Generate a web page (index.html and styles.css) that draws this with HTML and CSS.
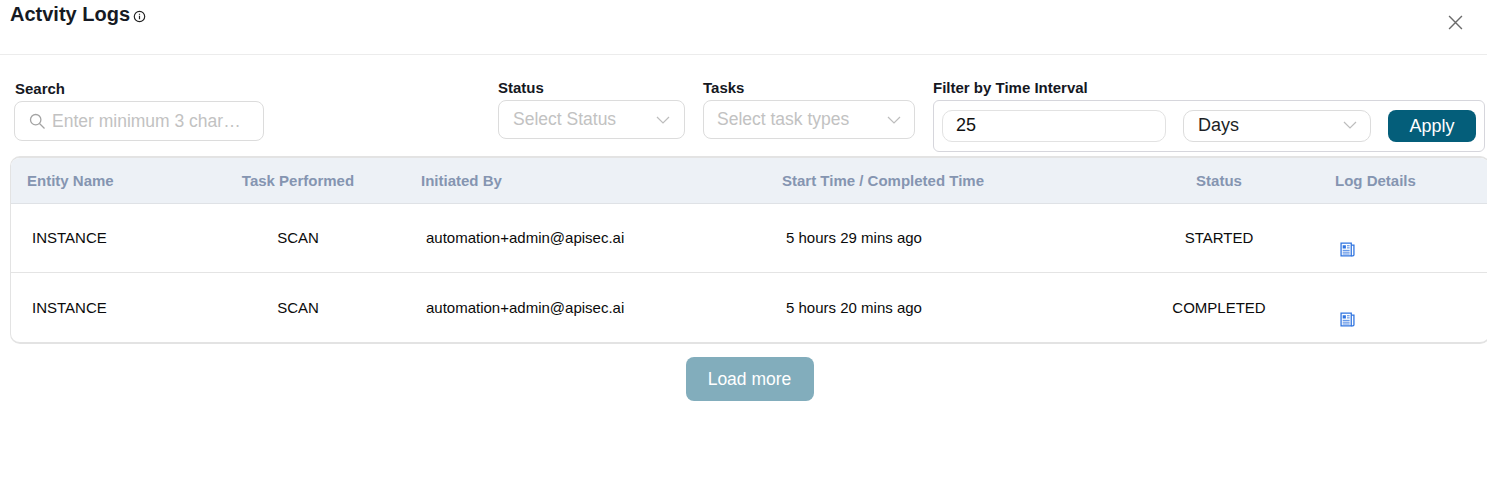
FILE: index.html
```html
<!DOCTYPE html>
<html lang="en">
<head>
<meta charset="utf-8">
<title>Activity Logs</title>
<link rel="stylesheet" href="styles.css">
</head>
<body>
<header class="head">
  <h1 class="title">Actvity Logs</h1>
  <svg class="info" viewBox="0 0 12 12"><circle cx="6" cy="6" r="4.800"/><path d="M6 5.300v3.200M6 3.400v1"/></svg>
  <svg class="close" viewBox="0 0 14 14"><path d="M1 1l12 12M13 1L1 13"/></svg>
</header>
<section class="filters">
  <div class="f f-search">
    <label class="lbl lbl-first">Search</label>
    <div class="box box-search">
      <svg class="mag" viewBox="0 0 16 16"><circle cx="6.700" cy="6.700" r="5.200"/><path d="M10.500 10.500l5 5"/></svg>
      <span class="ph">Enter minimum 3 char…</span>
    </div>
  </div>
  <div class="f f-status">
    <label class="lbl">Status</label>
    <div class="box box-sel"><span class="ph">Select Status</span><svg class="chev" viewBox="0 0 14 8"><path d="M1 1l6 6 6-6"/></svg></div>
  </div>
  <div class="f f-tasks">
    <label class="lbl">Tasks</label>
    <div class="box box-sel box-tasks"><span class="ph">Select task types</span><svg class="chev" viewBox="0 0 14 8"><path d="M1 1l6 6 6-6"/></svg></div>
  </div>
  <div class="f f-time">
    <label class="lbl">Filter by Time Interval</label>
    <div class="timebox">
      <div class="inner inner-num">25</div>
      <div class="inner inner-sel"><span>Days</span><svg class="chev" viewBox="0 0 14 8"><path d="M1 1l6 6 6-6"/></svg></div>
      <button class="apply">Apply</button>
    </div>
  </div>
</section>
<section class="table">
  <div class="row row-head">
    <div class="c1">Entity Name</div><div class="c2">Task Performed</div><div class="c3">Initiated By</div><div class="c4">Start Time / Completed Time</div><div class="c5">Status</div><div class="c6">Log Details</div>
  </div>
  <div class="row row-body">
    <div class="c1">INSTANCE</div><div class="c2">SCAN</div><div class="c3">automation+admin@apisec.ai</div><div class="c4">5 hours 29 mins ago</div><div class="c5">STARTED</div>
    <div class="c6"><svg class="doc" viewBox="0 0 14 14"><path class="sheet" d="M1 1h9.500v12H1z"/><path class="fold" d="M10.500 3h2.500v9a1 1 0 0 1-1 1h-1.500"/><path class="ln" d="M2.500 3h3v3h-3z"/><path class="txt" d="M6.500 3.500h2.500M6.500 5.500h2.500M2.500 7.800h6.500M2.500 9.500h6.500M2.500 11.200h6.500"/></svg></div>
  </div>
  <div class="row row-body">
    <div class="c1">INSTANCE</div><div class="c2">SCAN</div><div class="c3">automation+admin@apisec.ai</div><div class="c4">5 hours 20 mins ago</div><div class="c5">COMPLETED</div>
    <div class="c6"><svg class="doc" viewBox="0 0 14 14"><path class="sheet" d="M1 1h9.500v12H1z"/><path class="fold" d="M10.500 3h2.500v9a1 1 0 0 1-1 1h-1.500"/><path class="ln" d="M2.500 3h3v3h-3z"/><path class="txt" d="M6.500 3.500h2.500M6.500 5.500h2.500M2.500 7.800h6.500M2.500 9.500h6.500M2.500 11.200h6.500"/></svg></div>
  </div>
</section>
<div class="more"><button class="load">Load more</button></div>
</body>
</html>
```
FILE: styles.css
```css
* { box-sizing: border-box; }
html, body { margin: 0; padding: 0; height: 481px; overflow: hidden; background: #fff; }
body { font-family: "Liberation Sans", Arial, sans-serif; color: #111; font-size: 15px; }

.head { height: 55px; border-bottom: 1px solid #ececec; display: flex; align-items: flex-start; padding: 3px 24px 0 10px; }
.title { margin: 0; font-size: 20px; line-height: 22px; font-weight: 700; color: #161a23; }
.info { width: 13px; height: 13px; margin: 7px 0 0 3px; fill: none; stroke: #222; stroke-width: 1.1; }
.close { width: 15px; height: 15px; margin: 12px 0 0 auto; fill: none; stroke: #6b6b6b; stroke-width: 1.3; }

.filters { display: flex; padding: 25px 0 0 14px; height: 101px; }
.f { display: flex; flex-direction: column; }
.lbl { font-size: 15px; line-height: 16px; font-weight: 700; color: #15181f; }
.lbl-first { padding-left: 1px; }
.f-search { width: 250px; margin-right: 234px; padding-top: 1px; }
.f-status { width: 187px; margin-right: 18px; }
.f-tasks { width: 212px; margin-right: 18px; }
.f-time { width: 552px; }
.box { height: 39px; margin-top: 4px; border: 1px solid #dcdcdc; border-radius: 8px; display: flex; align-items: center; font-size: 17.500px; }
.box-search { height: 40px; padding-left: 14px; }
.box-sel { padding: 0 14px; justify-content: space-between; }
.box-tasks { padding: 0 13px; }
.ph { color: #c2c2c2; }
.mag { width: 16px; height: 16px; margin-right: 7px; fill: none; stroke: #a3a3a3; stroke-width: 1.3; }
.chev { width: 14px; height: 8px; fill: none; stroke: #bdbdbd; stroke-width: 1.2; flex: none; }

.timebox { height: 52px; margin-top: 4px; border: 1px solid #d6d6dc; border-radius: 6px; display: flex; align-items: center; padding: 0 8px; font-size: 18px; }
.inner { height: 32px; border: 1px solid #e2e2e2; border-radius: 10px; display: flex; align-items: center; padding-bottom: 2px; }
.inner-num { width: 224px; padding-left: 13px; margin-right: 17px; color: #111; }
.inner-sel { width: 188px; padding: 0 13px 2px 14px; margin-right: 17px; justify-content: space-between; color: #1c1f26; border-color: #dcdcdc; }
.apply { width: 88px; height: 32px; border: 0; border-radius: 8px; background: #045e7a; color: #fff; font: 18px "Liberation Sans", Arial, sans-serif; padding: 0; }

.table { margin-left: 10px; width: 1480px; border: 1px solid #e3e3e3; border-top-width: 2px; border-bottom-width: 2px; border-radius: 10px; overflow: hidden; }
.row { display: grid; grid-template-columns: 197px 180px 378px 353px 200px 170px; align-items: center; }
.row-head { height: 46px; background: #edf1f6; border-bottom: 1px solid #dfe2e6; color: #8595b1; font-weight: 700; }
.row-body { height: 69px; font-size: 15px; color: #0b0b0b; border-bottom: 1px solid #e4e4e4; padding-bottom: 1px; }
.row-body:last-child { border-bottom: 0; padding-bottom: 0; }
.c2, .c5 { text-align: center; }
.row-head .c1 { padding-left: 16px; }
.row-head .c3 { padding-left: 33px; }
.row-head .c4 { padding-left: 16px; }
.row-head .c6 { padding-left: 16px; }
.row-body .c1 { padding-left: 21px; }
.row-body .c3 { padding-left: 38px; }
.row-body .c4 { padding-left: 20px; }
.row-body .c6 { padding: 24px 0 0 21px; display: flex; }

.doc { width: 15px; height: 15px; fill: none; stroke: #2f74e0; stroke-width: 1.2; }
.doc .ln { stroke: none; fill: #2f74e0; }
.doc .txt { stroke-width: .8; }

.more { display: flex; justify-content: center; padding: 13px 0 0 12px; }
.load { width: 128px; height: 44px; border: 0; border-radius: 8px; background: #82adbc; color: #fff; font: 17.500px "Liberation Sans", Arial, sans-serif; padding: 0; }
```
